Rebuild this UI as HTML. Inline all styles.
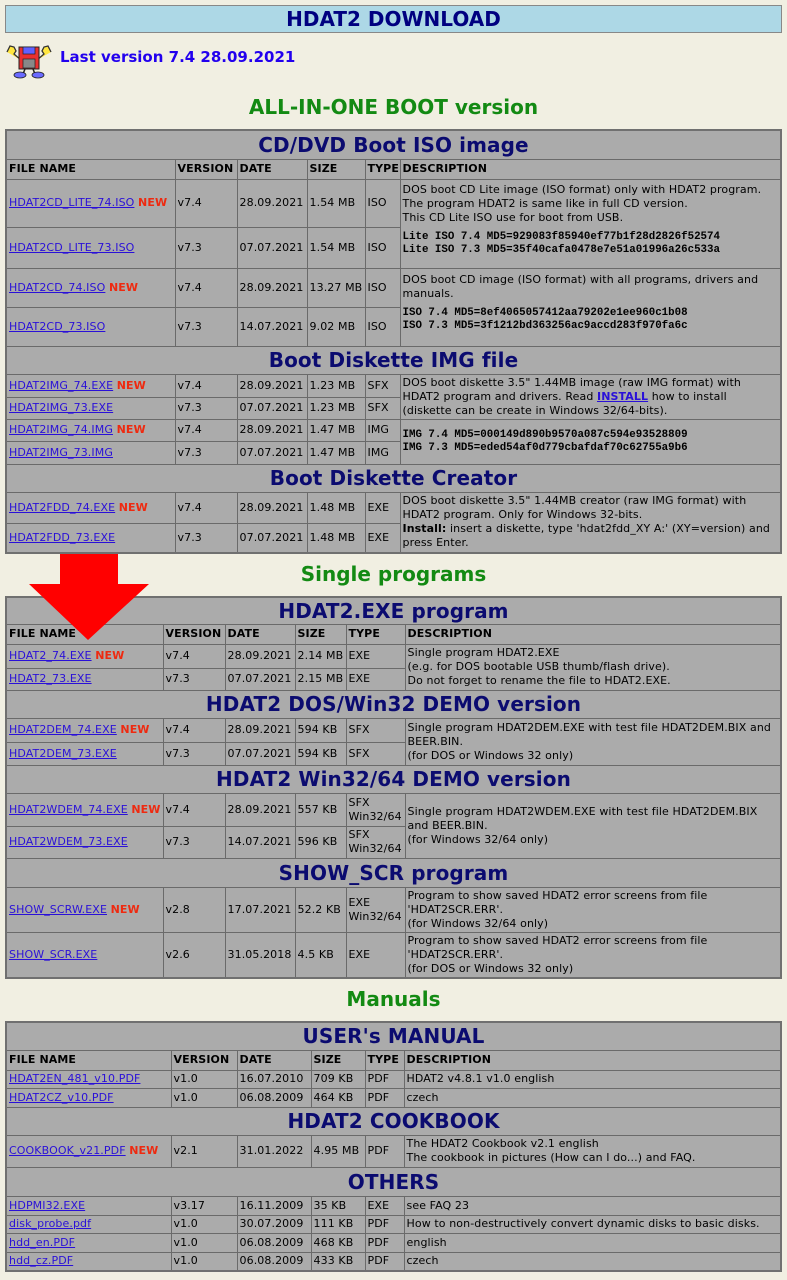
<!DOCTYPE html>
<html><head><meta charset="utf-8">
<style>
body{margin:0;background:#f1efe2;font-family:"DejaVu Sans","Liberation Sans",sans-serif;font-size:11px;color:#000;width:787px;height:1280px;position:relative;overflow:hidden}
.top{position:absolute;left:5px;top:5px;width:775px;height:26px;background:#add8e6;border:1px solid #888;text-align:center;font-size:20px;font-weight:bold;color:#000080;line-height:26px}
.last{position:absolute;left:60px;top:48px;font-size:15px;font-weight:bold;color:#2200ee}
.sec{position:absolute;left:0;width:787px;text-align:center;font-size:20px;font-weight:bold;color:#138a13}
table{position:absolute;left:5px;width:777px;border-collapse:collapse;table-layout:fixed;background:#ababab;border:2px solid #707070}
td{border:1px solid #6a6a6a;padding:0 2px;vertical-align:middle;line-height:14px;overflow:hidden;white-space:nowrap;font-size:11px;letter-spacing:0.1px}
td.d{white-space:normal}
.t td{text-align:center;font-size:20px;font-weight:bold;color:#0b0b70;line-height:24px;padding:0}
.h td{font-weight:bold}
a{color:#2a10d8;text-decoration:underline}
.n{color:#ee2a10;font-weight:bold}
.m{font-family:"Liberation Mono",monospace;font-weight:bold;font-size:10.8px;line-height:13px;letter-spacing:0}
</style></head><body>
<div class="top">HDAT2 DOWNLOAD</div>
<svg style="position:absolute;left:5px;top:43px" width="48" height="36" viewBox="0 0 48 36">
<path d="M2 9 L5 3 L9 4 L11 8 L9 11 L16 17" fill="#ffe640" stroke="#333" stroke-width="1.3"/>
<path d="M46 9 L43 3 L39 4 L37 8 L39 11 L32 17" fill="#ffe640" stroke="#333" stroke-width="1.3"/>
<rect x="14" y="4" width="20" height="22" fill="#e83030" stroke="#222"/>
<rect x="18" y="4" width="12" height="7" fill="#6060ff" stroke="#222" stroke-width=".7"/>
<rect x="18" y="16" width="12" height="9" fill="#888" stroke="#222" stroke-width=".7"/>
<path d="M20 26 L18 31 M28 26 L30 31" stroke="#222" stroke-width="1.5"/>
<ellipse cx="15" cy="32" rx="6" ry="3" fill="#6a6aff" stroke="#222" stroke-width=".8"/>
<ellipse cx="33" cy="32" rx="6" ry="3" fill="#6a6aff" stroke="#222" stroke-width=".8"/>
</svg>
<div class="last">Last version 7.4 28.09.2021</div>
<div class="sec" style="top:95px">ALL-IN-ONE BOOT version</div>

<table style="top:129px">
<colgroup><col style="width:169px"><col style="width:62px"><col style="width:70px"><col style="width:58px"><col style="width:35px"><col></colgroup>
<tr class="t" style="height:29px"><td colspan="6">CD/DVD Boot ISO image</td></tr>
<tr class="h" style="height:20px"><td>FILE NAME</td><td>VERSION</td><td>DATE</td><td>SIZE</td><td>TYPE</td><td>DESCRIPTION</td></tr>
<tr style="height:48px"><td><a>HDAT2CD_LITE_74.ISO</a> <span class="n">NEW</span></td><td>v7.4</td><td>28.09.2021</td><td>1.54 MB</td><td>ISO</td><td class="d" rowspan="2">DOS boot CD Lite image (ISO format) only with HDAT2 program.<br>The program HDAT2 is same like in full CD version.<br>This CD Lite ISO use for boot from USB.<div class="m" style="margin-top:6px">Lite ISO 7.4 MD5=929083f85940ef77b1f28d2826f52574<br>Lite ISO 7.3 MD5=35f40cafa0478e7e51a01996a26c533a</div><div style="height:8px"></div></td></tr>
<tr style="height:41px"><td><a>HDAT2CD_LITE_73.ISO</a></td><td>v7.3</td><td>07.07.2021</td><td>1.54 MB</td><td>ISO</td></tr>
<tr style="height:39px"><td><a>HDAT2CD_74.ISO</a> <span class="n">NEW</span></td><td>v7.4</td><td>28.09.2021</td><td>13.27 MB</td><td>ISO</td><td class="d" rowspan="2">DOS boot CD image (ISO format) with all programs, drivers and manuals.<div class="m" style="margin-top:6px">ISO 7.4 MD5=8ef4065057412aa79202e1ee960c1b08<br>ISO 7.3 MD5=3f1212bd363256ac9accd283f970fa6c</div><div style="height:8px"></div></td></tr>
<tr style="height:39px"><td><a>HDAT2CD_73.ISO</a></td><td>v7.3</td><td>14.07.2021</td><td>9.02 MB</td><td>ISO</td></tr>
<tr class="t" style="height:28px"><td colspan="6">Boot Diskette IMG file</td></tr>
<tr style="height:23px"><td><a>HDAT2IMG_74.EXE</a> <span class="n">NEW</span></td><td>v7.4</td><td>28.09.2021</td><td>1.23 MB</td><td>SFX</td><td class="d" rowspan="2">DOS boot diskette 3.5" 1.44MB image (raw IMG format) with HDAT2 program and drivers. Read <a style="font-weight:bold">INSTALL</a> how to install (diskette can be create in Windows 32/64-bits).</td></tr>
<tr style="height:22px"><td><a>HDAT2IMG_73.EXE</a></td><td>v7.3</td><td>07.07.2021</td><td>1.23 MB</td><td>SFX</td></tr>
<tr style="height:22px"><td><a>HDAT2IMG_74.IMG</a> <span class="n">NEW</span></td><td>v7.4</td><td>28.09.2021</td><td>1.47 MB</td><td>IMG</td><td class="d" rowspan="2"><div class="m">IMG 7.4 MD5=000149d890b9570a087c594e93528809<br>IMG 7.3 MD5=eded54af0d779cbafdaf70c62755a9b6</div></td></tr>
<tr style="height:23px"><td><a>HDAT2IMG_73.IMG</a></td><td>v7.3</td><td>07.07.2021</td><td>1.47 MB</td><td>IMG</td></tr>
<tr class="t" style="height:28px"><td colspan="6">Boot Diskette Creator</td></tr>
<tr style="height:31px"><td><a>HDAT2FDD_74.EXE</a> <span class="n">NEW</span></td><td>v7.4</td><td>28.09.2021</td><td>1.48 MB</td><td>EXE</td><td class="d" rowspan="2">DOS boot diskette 3.5" 1.44MB creator (raw IMG format) with HDAT2 program. Only for Windows 32-bits.<br><b>Install:</b> insert a diskette, type 'hdat2fdd_XY A:' (XY=version) and press Enter.</td></tr>
<tr style="height:30px"><td><a>HDAT2FDD_73.EXE</a></td><td>v7.3</td><td>07.07.2021</td><td>1.48 MB</td><td>EXE</td></tr>
</table>

<div class="sec" style="top:562px">Single programs</div>

<table style="top:596px">
<colgroup><col style="width:157px"><col style="width:62px"><col style="width:70px"><col style="width:51px"><col style="width:59px"><col></colgroup>
<tr class="t" style="height:27px"><td colspan="6">HDAT2.EXE program</td></tr>
<tr class="h" style="height:20px"><td>FILE NAME</td><td>VERSION</td><td>DATE</td><td>SIZE</td><td>TYPE</td><td>DESCRIPTION</td></tr>
<tr style="height:24px"><td><a>HDAT2_74.EXE</a> <span class="n">NEW</span></td><td>v7.4</td><td>28.09.2021</td><td>2.14 MB</td><td>EXE</td><td class="d" rowspan="2">Single program HDAT2.EXE<br>(e.g. for DOS bootable USB thumb/flash drive).<br>Do not forget to rename the file to HDAT2.EXE.</td></tr>
<tr style="height:22px"><td><a>HDAT2_73.EXE</a></td><td>v7.3</td><td>07.07.2021</td><td>2.15 MB</td><td>EXE</td></tr>
<tr class="t" style="height:28px"><td colspan="6">HDAT2 DOS/Win32 DEMO version</td></tr>
<tr style="height:24px"><td><a>HDAT2DEM_74.EXE</a> <span class="n">NEW</span></td><td>v7.4</td><td>28.09.2021</td><td>594 KB</td><td>SFX</td><td class="d" rowspan="2">Single program HDAT2DEM.EXE with test file HDAT2DEM.BIX and BEER.BIN.<br>(for DOS or Windows 32 only)</td></tr>
<tr style="height:23px"><td><a>HDAT2DEM_73.EXE</a></td><td>v7.3</td><td>07.07.2021</td><td>594 KB</td><td>SFX</td></tr>
<tr class="t" style="height:28px"><td colspan="6">HDAT2 Win32/64 DEMO version</td></tr>
<tr style="height:33px"><td><a>HDAT2WDEM_74.EXE</a> <span class="n">NEW</span></td><td>v7.4</td><td>28.09.2021</td><td>557 KB</td><td>SFX<br>Win32/64</td><td class="d" rowspan="2">Single program HDAT2WDEM.EXE with test file HDAT2DEM.BIX and BEER.BIN.<br>(for Windows 32/64 only)</td></tr>
<tr style="height:32px"><td><a>HDAT2WDEM_73.EXE</a></td><td>v7.3</td><td>14.07.2021</td><td>596 KB</td><td>SFX<br>Win32/64</td></tr>
<tr class="t" style="height:29px"><td colspan="6">SHOW_SCR program</td></tr>
<tr style="height:45px"><td><a>SHOW_SCRW.EXE</a> <span class="n">NEW</span></td><td>v2.8</td><td>17.07.2021</td><td>52.2 KB</td><td>EXE<br>Win32/64</td><td class="d">Program to show saved HDAT2 error screens from file 'HDAT2SCR.ERR'.<br>(for Windows 32/64 only)</td></tr>
<tr style="height:46px"><td><a>SHOW_SCR.EXE</a></td><td>v2.6</td><td>31.05.2018</td><td>4.5 KB</td><td>EXE</td><td class="d">Program to show saved HDAT2 error screens from file 'HDAT2SCR.ERR'.<br>(for DOS or Windows 32 only)</td></tr>
</table>

<svg style="position:absolute;left:28px;top:554px" width="122" height="88" viewBox="0 0 122 88">
<path d="M32 0 H90 V30 H121 L60 86 L1 30 H32 Z" fill="#ff0000"/>
</svg>

<div class="sec" style="top:987px">Manuals</div>

<table style="top:1021px">
<colgroup><col style="width:165px"><col style="width:66px"><col style="width:74px"><col style="width:54px"><col style="width:39px"><col></colgroup>
<tr class="t" style="height:28px"><td colspan="6">USER's MANUAL</td></tr>
<tr class="h" style="height:20px"><td>FILE NAME</td><td>VERSION</td><td>DATE</td><td>SIZE</td><td>TYPE</td><td>DESCRIPTION</td></tr>
<tr style="height:18px"><td><a>HDAT2EN_481_v10.PDF</a></td><td>v1.0</td><td>16.07.2010</td><td>709 KB</td><td>PDF</td><td>HDAT2 v4.8.1 v1.0 english</td></tr>
<tr style="height:19px"><td><a>HDAT2CZ_v10.PDF</a></td><td>v1.0</td><td>06.08.2009</td><td>464 KB</td><td>PDF</td><td>czech</td></tr>
<tr class="t" style="height:28px"><td colspan="6">HDAT2 COOKBOOK</td></tr>
<tr style="height:32px"><td><a>COOKBOOK_v21.PDF</a> <span class="n">NEW</span></td><td>v2.1</td><td>31.01.2022</td><td>4.95 MB</td><td>PDF</td><td class="d">The HDAT2 Cookbook v2.1 english<br>The cookbook in pictures (How can I do...) and FAQ.</td></tr>
<tr class="t" style="height:29px"><td colspan="6">OTHERS</td></tr>
<tr style="height:19px"><td><a>HDPMI32.EXE</a></td><td>v3.17</td><td>16.11.2009</td><td>35 KB</td><td>EXE</td><td>see FAQ 23</td></tr>
<tr style="height:18px"><td><a>disk_probe.pdf</a></td><td>v1.0</td><td>30.07.2009</td><td>111 KB</td><td>PDF</td><td>How to non-destructively convert dynamic disks to basic disks.</td></tr>
<tr style="height:19px"><td><a>hdd_en.PDF</a></td><td>v1.0</td><td>06.08.2009</td><td>468 KB</td><td>PDF</td><td>english</td></tr>
<tr style="height:19px"><td><a>hdd_cz.PDF</a></td><td>v1.0</td><td>06.08.2009</td><td>433 KB</td><td>PDF</td><td>czech</td></tr>
</table>
</body></html>
